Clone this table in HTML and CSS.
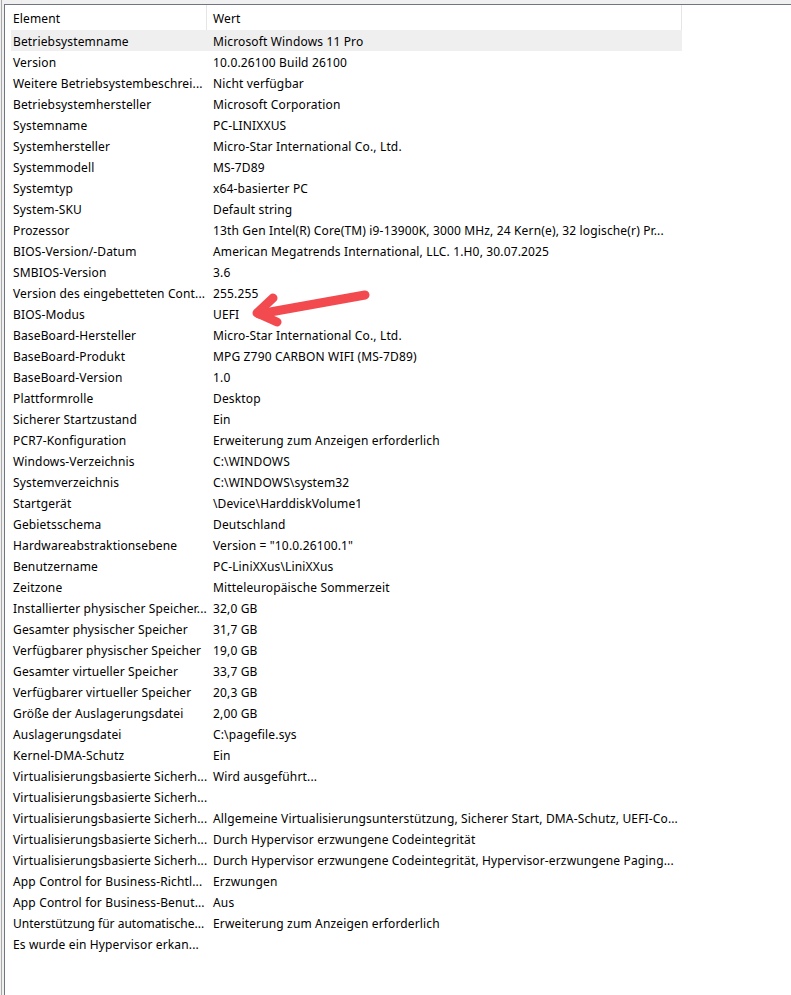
FILE: index.html
```html
<!DOCTYPE html>
<html lang="de">
<head>
<meta charset="utf-8">
<title>Systeminformationen</title>
<link rel="stylesheet" href="styles.css">
</head>
<body>
<div class="window">
  <div class="list">
    <div class="header">
      <div class="hcell c1">Element</div>
      <div class="hcell c2">Wert</div>
    </div>
    <div class="rows">
      <div class="row selected"><div class="cell c1">Betriebsystemname</div><div class="cell c2">Microsoft Windows 11 Pro</div></div>
      <div class="row"><div class="cell c1">Version</div><div class="cell c2">10.0.26100 Build 26100</div></div>
      <div class="row"><div class="cell c1">Weitere Betriebsystembeschrei...</div><div class="cell c2">Nicht verfügbar</div></div>
      <div class="row"><div class="cell c1">Betriebsystemhersteller</div><div class="cell c2">Microsoft Corporation</div></div>
      <div class="row"><div class="cell c1">Systemname</div><div class="cell c2">PC-LINIXXUS</div></div>
      <div class="row"><div class="cell c1">Systemhersteller</div><div class="cell c2">Micro-Star International Co., Ltd.</div></div>
      <div class="row"><div class="cell c1">Systemmodell</div><div class="cell c2">MS-7D89</div></div>
      <div class="row"><div class="cell c1">Systemtyp</div><div class="cell c2">x64-basierter PC</div></div>
      <div class="row"><div class="cell c1">System-SKU</div><div class="cell c2">Default string</div></div>
      <div class="row"><div class="cell c1">Prozessor</div><div class="cell c2">13th Gen Intel(R) Core(TM) i9-13900K, 3000 MHz, 24 Kern(e), 32 logische(r) Pr...</div></div>
      <div class="row"><div class="cell c1">BIOS-Version/-Datum</div><div class="cell c2">American Megatrends International, LLC. 1.H0, 30.07.2025</div></div>
      <div class="row"><div class="cell c1">SMBIOS-Version</div><div class="cell c2">3.6</div></div>
      <div class="row"><div class="cell c1">Version des eingebetteten Cont...</div><div class="cell c2">255.255</div></div>
      <div class="row"><div class="cell c1">BIOS-Modus</div><div class="cell c2">UEFI</div></div>
      <div class="row"><div class="cell c1">BaseBoard-Hersteller</div><div class="cell c2">Micro-Star International Co., Ltd.</div></div>
      <div class="row"><div class="cell c1">BaseBoard-Produkt</div><div class="cell c2">MPG Z790 CARBON WIFI (MS-7D89)</div></div>
      <div class="row"><div class="cell c1">BaseBoard-Version</div><div class="cell c2">1.0</div></div>
      <div class="row"><div class="cell c1">Plattformrolle</div><div class="cell c2">Desktop</div></div>
      <div class="row"><div class="cell c1">Sicherer Startzustand</div><div class="cell c2">Ein</div></div>
      <div class="row"><div class="cell c1">PCR7-Konfiguration</div><div class="cell c2">Erweiterung zum Anzeigen erforderlich</div></div>
      <div class="row"><div class="cell c1">Windows-Verzeichnis</div><div class="cell c2">C:\WINDOWS</div></div>
      <div class="row"><div class="cell c1">Systemverzeichnis</div><div class="cell c2">C:\WINDOWS\system32</div></div>
      <div class="row"><div class="cell c1">Startgerät</div><div class="cell c2">\Device\HarddiskVolume1</div></div>
      <div class="row"><div class="cell c1">Gebietsschema</div><div class="cell c2">Deutschland</div></div>
      <div class="row"><div class="cell c1">Hardwareabstraktionsebene</div><div class="cell c2">Version = "10.0.26100.1"</div></div>
      <div class="row"><div class="cell c1">Benutzername</div><div class="cell c2">PC-LiniXXus\LiniXXus</div></div>
      <div class="row"><div class="cell c1">Zeitzone</div><div class="cell c2">Mitteleuropäische Sommerzeit</div></div>
      <div class="row"><div class="cell c1">Installierter physischer Speicher...</div><div class="cell c2">32,0 GB</div></div>
      <div class="row"><div class="cell c1">Gesamter physischer Speicher</div><div class="cell c2">31,7 GB</div></div>
      <div class="row"><div class="cell c1">Verfügbarer physischer Speicher</div><div class="cell c2">19,0 GB</div></div>
      <div class="row"><div class="cell c1">Gesamter virtueller Speicher</div><div class="cell c2">33,7 GB</div></div>
      <div class="row"><div class="cell c1">Verfügbarer virtueller Speicher</div><div class="cell c2">20,3 GB</div></div>
      <div class="row"><div class="cell c1">Größe der Auslagerungsdatei</div><div class="cell c2">2,00 GB</div></div>
      <div class="row"><div class="cell c1">Auslagerungsdatei</div><div class="cell c2">C:\pagefile.sys</div></div>
      <div class="row"><div class="cell c1">Kernel-DMA-Schutz</div><div class="cell c2">Ein</div></div>
      <div class="row"><div class="cell c1">Virtualisierungsbasierte Sicherh...</div><div class="cell c2">Wird ausgeführt...</div></div>
      <div class="row"><div class="cell c1">Virtualisierungsbasierte Sicherh...</div><div class="cell c2"></div></div>
      <div class="row"><div class="cell c1">Virtualisierungsbasierte Sicherh...</div><div class="cell c2">Allgemeine Virtualisierungsunterstützung, Sicherer Start, DMA-Schutz, UEFI-Co...</div></div>
      <div class="row"><div class="cell c1">Virtualisierungsbasierte Sicherh...</div><div class="cell c2">Durch Hypervisor erzwungene Codeintegrität</div></div>
      <div class="row"><div class="cell c1">Virtualisierungsbasierte Sicherh...</div><div class="cell c2">Durch Hypervisor erzwungene Codeintegrität, Hypervisor-erzwungene Paging...</div></div>
      <div class="row"><div class="cell c1">App Control for Business-Richtl...</div><div class="cell c2">Erzwungen</div></div>
      <div class="row"><div class="cell c1">App Control for Business-Benut...</div><div class="cell c2">Aus</div></div>
      <div class="row"><div class="cell c1 tight">Unterstützung für automatische...</div><div class="cell c2">Erweiterung zum Anzeigen erforderlich</div></div>
      <div class="row"><div class="cell c1">Es wurde ein Hypervisor erkan...</div><div class="cell c2"></div></div>
    </div>
    <svg class="arrow" width="791" height="995" viewBox="0 0 791 995" aria-hidden="true">
      <g fill="none" stroke="#f34a50" stroke-width="9" stroke-linecap="round" stroke-linejoin="round">
        <path d="M365 295 L259 314"/>
        <path d="M273 298 L257 313 L277 322"/>
      </g>
    </svg>
  </div>
</div>
</body>
</html>
```

FILE: styles.css
```css
html, body {
  margin: 0;
  padding: 0;
}
body {
  background: #f0f0f0;
  font-family: "Noto Sans", "Segoe UI", sans-serif;
  font-size: 12px;
  letter-spacing: 0.15px;
  color: #000;
  width: 791px;
  height: 995px;
  overflow: hidden;
}
.window {
  height: 995px;
  box-sizing: border-box;
  padding-top: 4px;
  padding-left: 2px;
  margin-left: 1px;
  border-left: 1px solid #a9a9a9;
}
.list {
  height: 991px;
  box-sizing: border-box;
  background: #fff;
  border-top: 1px solid #6f7682;
  border-left: 1px solid #6f7682;
  padding-left: 6px;
}
.header {
  display: flex;
  height: 25px;
}
.hcell {
  box-sizing: border-box;
  height: 25px;
  line-height: 24px;
  padding-top: 2px;
  border-right: 1px solid #e5e5e5;
  white-space: nowrap;
}
.hcell.c1 {
  width: 196px;
  padding-left: 2px;
}
.hcell.c2 {
  width: 475px;
  padding-left: 6px;
}
.rows {
  display: flex;
  flex-direction: column;
}
.row {
  display: flex;
  height: 21px;
  line-height: 21px;
  width: 671px;
}
.row.selected {
  background: #efefef;
}
.cell {
  box-sizing: border-box;
  height: 21px;
  padding-top: 1px;
  white-space: nowrap;
  overflow: visible;
}
.cell.c1 {
  width: 196px;
  padding-left: 2px;
}
.cell.c1.tight {
  letter-spacing: 0;
}
.cell.c2 {
  width: 475px;
  padding-left: 6px;
}
.arrow {
  position: absolute;
  left: 0;
  top: 0;
  pointer-events: none;
}
```
